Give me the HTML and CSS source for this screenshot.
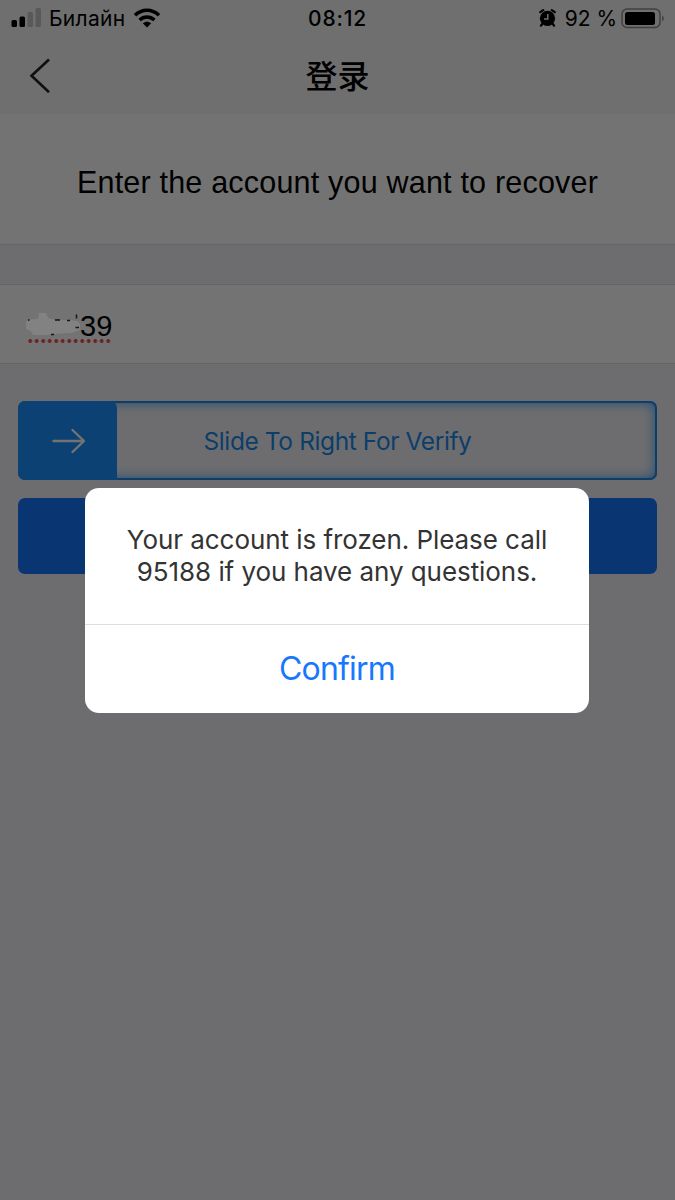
FILE: index.html
```html
<!DOCTYPE html>
<html lang="en">
<head>
    <meta charset="UTF-8">
    <meta name="viewport" content="width=device-width, initial-scale=1.0">
    <title>登录</title>
    <link rel="stylesheet" href="styles.css">
</head>
<body>
    <div class="page">
        <header class="top">
            <div class="status">
                <div class="status-left">
                    <svg class="signal" width="31" height="20" viewBox="0 0 31 20">
                        <rect x="0.500" y="12" width="5.500" height="7" rx="1.500"/>
                        <rect x="8.500" y="8.500" width="5.500" height="10.500" rx="1.500"/>
                        <rect class="off" x="16.500" y="4" width="5.500" height="15" rx="1.500"/>
                        <rect class="off" x="24.500" y="0" width="5.500" height="19" rx="1.500"/>
                    </svg>
                    <span class="carrier">Билайн</span>
                    <svg class="wifi" width="28" height="20" viewBox="0 0 28 20">
                        <path class="wave" d="M2 7.300C9 .6 19 .6 26 7.300"/>
                        <path class="wave" d="M6.600 12C11 8 17 8 21.400 12"/>
                        <path d="M9.800 15.300c2.500-2.200 5.900-2.200 8.400 0L14 19.500z"/>
                    </svg>
                </div>
                <span class="time">08:12</span>
                <div class="status-right">
                    <svg class="alarm" width="17" height="18" viewBox="0 0 17 18">
                        <circle cx="8.500" cy="9.300" r="7.600"/>
                        <path class="legs" d="M1.200 3.200L4.200 1.200M15.800 3.200L12.800 1.200M3.500 14.500L2 16.600M13.500 14.500l1.500 2.100"/>
                        <path class="hands" d="M8.800 5v5H5"/>
                    </svg>
                    <span class="percent">92 %</span>
                    <svg class="battery" width="43" height="21" viewBox="0 0 43 21">
                        <rect class="case" x="1" y="1" width="38" height="18.500" rx="5"/>
                        <rect x="4" y="4" width="30" height="13" rx="2.500"/>
                        <path class="cap" d="M41.200 7.500c2 .8 2 5 0 5.800z"/>
                    </svg>
                </div>
            </div>
            <div class="nav">
                <svg class="back" width="22" height="36" viewBox="0 0 22 36">
                    <path d="M20 2.500L2.500 18.800 20 35.200"/>
                </svg>
                <h1>登录</h1>
            </div>
        </header>

        <div class="intro">Enter the account you want to recover</div>

        <div class="field">
            <div class="account">
                <svg class="smudge" width="62" height="28" viewBox="0 0 62 28">
                    <path class="cover" d="M-1 10.500L3 8.500l8-.5 1-6h7l2 5 8 2h12l9 1 3 3v6l-8 3-12 .5-14 1.500H6L4 20l-5-2z"/>
                    <path class="ink" d="M1 9h1.500M49.500 3.500v4M48.500 16.500h3.500M24 23.500h3M28 9h5M40 9.500h3"/>
                </svg>
                <span>39</span>
            </div>
        </div>

        <div class="slider">
            <div class="handle">
                <svg width="34" height="26" viewBox="0 0 34 26">
                    <path d="M1.500 13h30M20.500 2L32 13 20.500 24"/>
                </svg>
            </div>
            <span class="slider-text">Slide To Right For Verify</span>
        </div>
        <div class="submit"></div>
    </div>

    <div class="overlay">
        <div class="dialog">
            <p>Your account is frozen. Please call<br>95188 if you have any questions.</p>
            <button type="button">Confirm</button>
        </div>
    </div>
</body>
</html>
```

FILE: styles.css
```css
* {
    box-sizing: border-box;
}
body {
    margin: 0;
    font-family: Inter, Roboto, "Noto Sans CJK SC", sans-serif;
    color: #000;
}
.page {
    height: 1200px;
    overflow: hidden;
    background: #f2f2f6;
}
svg {
    display: block;
}
.top {
    height: 114px;
    background: #f5f5f5;
}

/* status bar */
.status {
    display: grid;
    grid-template-columns: 1fr auto 1fr;
    align-items: center;
    height: 36px;
    padding: 0 11px;
    font-size: 21px;
}
.status-left, .status-right {
    display: flex;
    align-items: center;
}
.status-right {
    justify-content: flex-end;
}
.signal .off {
    fill: #c6c6c6;
}
.carrier {
    margin: 0 7px 0 7px;
    letter-spacing: 0.3px;
}
.wave {
    fill: none;
    stroke: #000;
    stroke-width: 3.6;
}
.time {
    font-weight: 500;
    letter-spacing: 0.8px;
}
.legs {
    stroke: #000;
    stroke-width: 2.2;
    stroke-linecap: round;
}
.hands {
    fill: none;
    stroke: #f5f5f5;
    stroke-width: 1.5;
}
.percent {
    margin: 0 4px 0 9px;
}
.case {
    fill: none;
    stroke: #8e8e8e;
    stroke-width: 1.5;
}
.cap {
    fill: #8e8e8e;
}

/* title bar */
.nav {
    display: grid;
    grid-template-columns: 1fr auto 1fr;
    align-items: center;
    height: 78px;
    padding: 0 29px;
}
.back path {
    fill: none;
    stroke: #222;
    stroke-width: 2.6;
}
h1 {
    margin: 0;
    padding-bottom: 2px;
    font-family: "Noto Sans CJK SC", sans-serif;
    font-size: 32px;
    font-weight: 500;
    line-height: 74px;
}

.intro {
    height: 131px;
    background: #fff;
    border-bottom: 1px solid #e2e2e6;
    font-family: "Liberation Sans", Arial, sans-serif;
    font-size: 30.5px;
    letter-spacing: 0.2px;
    line-height: 136px;
    text-align: center;
    white-space: nowrap;
}
.field {
    height: 80px;
    margin-top: 39px;
    padding: 26px 27px 0;
    background: #fff;
    border-top: 1px solid #dedee2;
    border-bottom: 1px solid #dedee2;
}
.account {
    display: flex;
    width: 85px;
    height: 32px;
    justify-content: space-between;
    font-family: "Liberation Sans", Arial, sans-serif;
    font-size: 29px;
    line-height: 31px;
    background: radial-gradient(circle at 3.2px 2px, #f0494c 1.6px, transparent 2.2px) 0 100% / 6.5px 4px repeat-x;
}
/* the hidden part of the name stays above the dimmed page */
.smudge {
    position: relative;
    z-index: 1;
    flex: none;
    margin-right: -9px;
    overflow: visible;
}
.ink {
    fill: none;
    stroke: #151515;
    stroke-width: 1.5;
}
.cover {
    fill: #828282;
}

/* slide to verify */
.slider {
    display: grid;
    grid-template-columns: 99px 1fr 99px;
    align-items: center;
    width: 639px;
    height: 79px;
    margin: 37px auto 0;
    border-radius: 7px;
    box-shadow: inset 0 0 0 2px #1c8be8, inset 0 0 14px #1c93ff;
    overflow: hidden;
}
.handle {
    display: flex;
    align-items: center;
    justify-content: center;
    height: 79px;
    padding-left: 3px;
    border-radius: 7px 7px 0 7px;
    background: #1c93ff;
}
.handle path {
    fill: none;
    stroke: #fff;
    stroke-width: 2.4;
    stroke-linecap: round;
    stroke-linejoin: round;
}
.slider-text {
    color: #1c8bea;
    font-size: 24.5px;
    letter-spacing: -0.4px;
    text-align: center;
    white-space: nowrap;
}
.submit {
    width: 639px;
    height: 76px;
    margin: 18px auto 0;
    border-radius: 7px;
    background: #1677ff;
}

/* dialog over everything */
.overlay {
    position: absolute;
    inset: 0;
    display: flex;
    align-items: center;
    justify-content: center;
    padding-right: 1px;
    background: rgba(0, 0, 0, 0.55);
}
.dialog {
    width: 504px;
    height: 225px;
    border-radius: 14px;
    background: #fff;
    overflow: hidden;
}
.dialog p {
    height: 137px;
    margin: 0;
    padding-top: 36px;
    border-bottom: 1px solid #dedede;
    color: #333;
    font-size: 26px;
    letter-spacing: -0.06px;
    line-height: 32px;
    text-align: center;
    white-space: nowrap;
}
.dialog button {
    display: block;
    width: 100%;
    height: 88px;
    padding: 0;
    border: none;
    background: none;
    color: #1677ff;
    font-family: inherit;
    font-size: 32px;
    letter-spacing: -0.8px;
}
```
